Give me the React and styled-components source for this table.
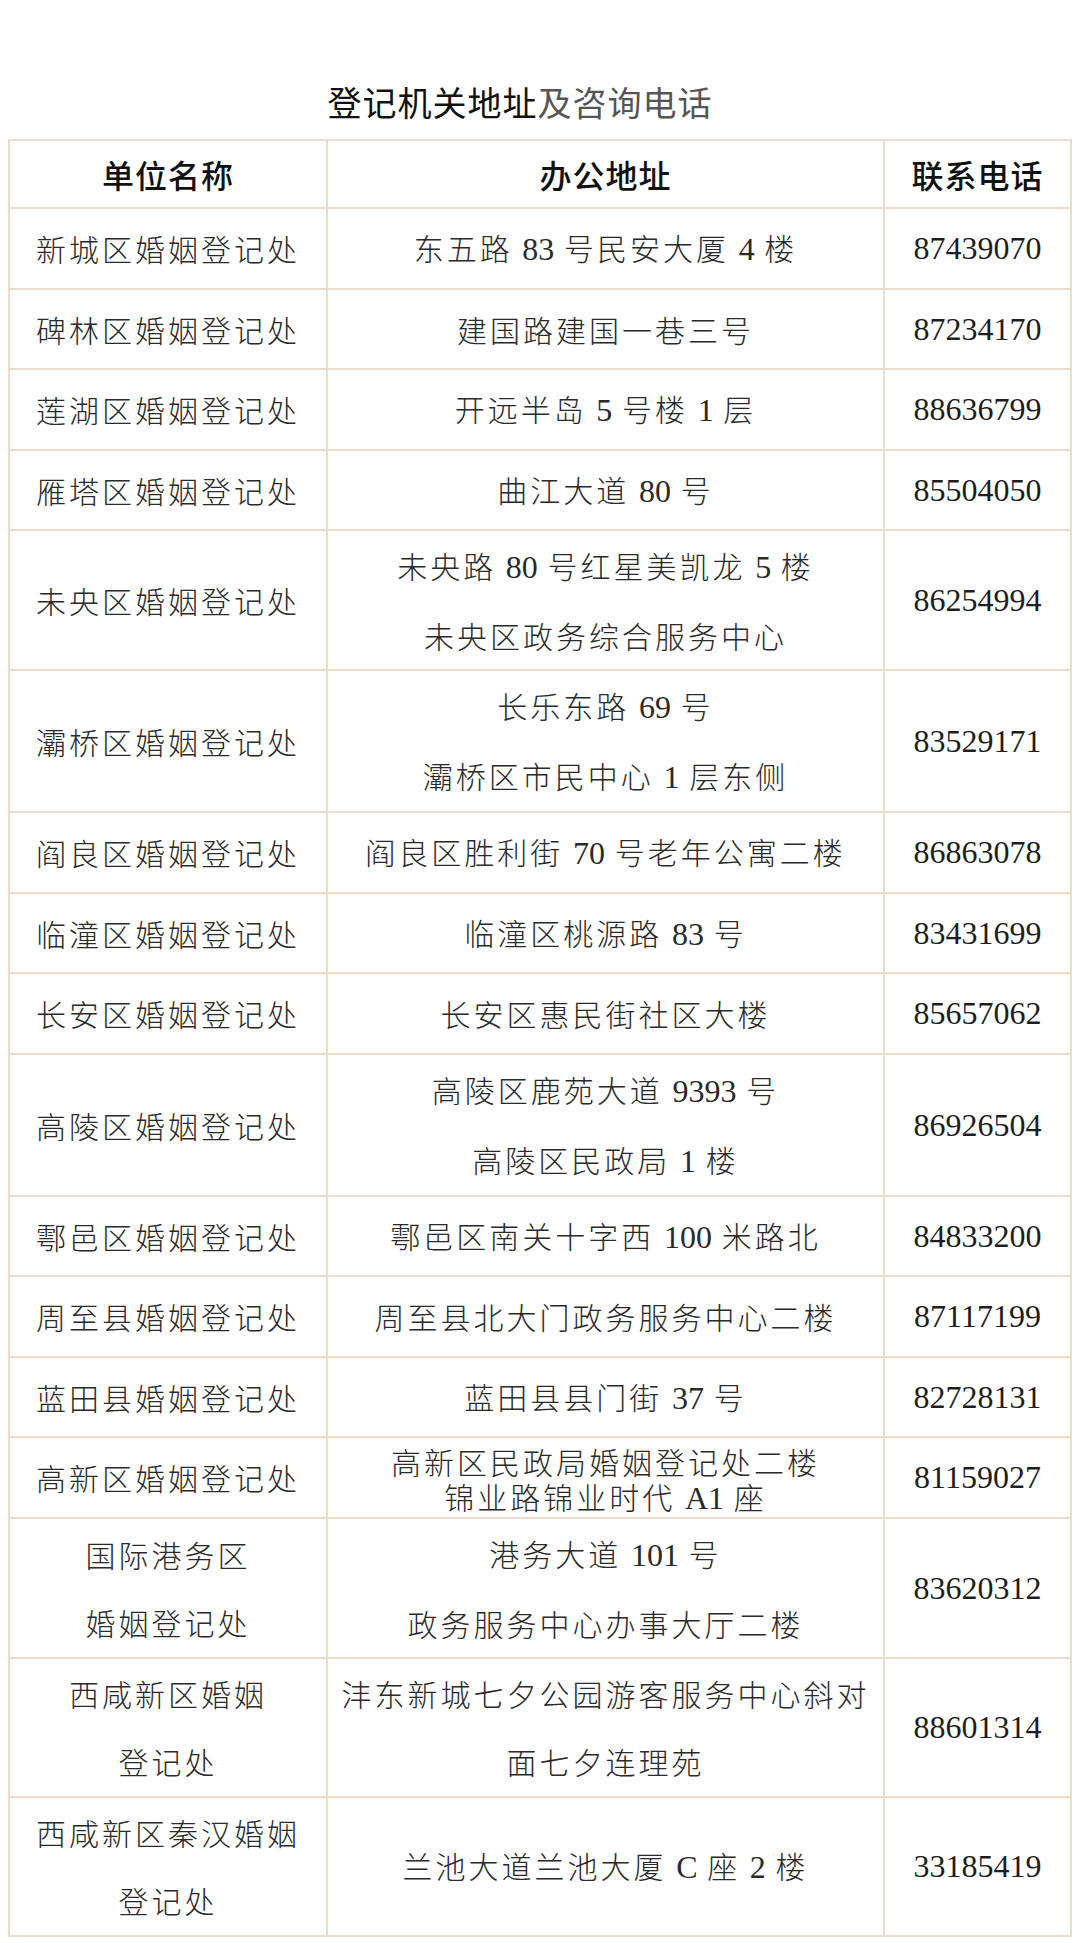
import React from 'react';
import styled, { createGlobalStyle } from 'styled-components';

const GlobalStyle = createGlobalStyle`
  html, body {
    margin: 0;
    padding: 0;
    background: #fff;
  }
  body {
    font-family: "Noto Sans CJK SC", "Noto Sans", sans-serif;
    color: #222;
  }
`;

const BORDER = '#ecdccb';

const Page = styled.div`
  width: 1080px;
  min-height: 1943px;
  padding-top: 78px;
  box-sizing: border-box;
  background: #fff;
`;

const Title = styled.h1`
  margin: 0 40px 13px 0;
  text-align: center;
  font-size: 34px;
  line-height: 48px;
  font-weight: 400;
  letter-spacing: 1px;
  color: #111;
`;

const TitleSoft = styled.span`
  color: #555;
`;

const Table = styled.table`
  margin-left: 8px;
  width: 1062px;
  border-collapse: collapse;
  table-layout: fixed;
  border: 2px solid ${BORDER};
`;

const HeadCell = styled.th`
  height: 68px;
  box-sizing: border-box;
  padding: 0;
  border: 2px solid ${BORDER};
  font-size: 32px;
  font-weight: 500;
  letter-spacing: 1px;
  line-height: 40px;
  color: #111;
  text-align: center;
  vertical-align: middle;
`;

const Cell = styled.td`
  height: ${props => props.tall ? '139px' : '80.5px'};
  box-sizing: border-box;
  padding: ${props => props.compact ? '6px 0 0' : '0'};
  border: 2px solid ${BORDER};
  font-size: 30px;
  font-weight: 300;
  letter-spacing: 3px;
  line-height: ${props => props.tall ? '68px' : props.compact ? '35px' : '40px'};
  color: #2a2a2a;
  text-align: center;
  vertical-align: middle;
  white-space: nowrap;
`;

const Line = styled.div`
  display: block;
`;

const Num = styled.span`
  font-family: "Liberation Serif", "Times New Roman", serif;
  font-size: 32px;
  letter-spacing: 0;
`;

const Phone = styled(Cell)`
  font-family: "Liberation Serif", "Times New Roman", serif;
  font-size: 32px;
  font-weight: 400;
  letter-spacing: 0;
  color: #1e1e1e;
`;

const rows = [
  { name: ['新城区婚姻登记处'], addr: ['东五路 83 号民安大厦 4 楼'], tel: '87439070' },
  { name: ['碑林区婚姻登记处'], addr: ['建国路建国一巷三号'], tel: '87234170' },
  { name: ['莲湖区婚姻登记处'], addr: ['开远半岛 5 号楼 1 层'], tel: '88636799' },
  { name: ['雁塔区婚姻登记处'], addr: ['曲江大道 80 号'], tel: '85504050' },
  { name: ['未央区婚姻登记处'], addr: ['未央路 80 号红星美凯龙 5 楼', '未央区政务综合服务中心'], tel: '86254994' },
  { name: ['灞桥区婚姻登记处'], addr: ['长乐东路 69 号', '灞桥区市民中心 1 层东侧'], tel: '83529171' },
  { name: ['阎良区婚姻登记处'], addr: ['阎良区胜利街 70 号老年公寓二楼'], tel: '86863078' },
  { name: ['临潼区婚姻登记处'], addr: ['临潼区桃源路 83 号'], tel: '83431699' },
  { name: ['长安区婚姻登记处'], addr: ['长安区惠民街社区大楼'], tel: '85657062' },
  { name: ['高陵区婚姻登记处'], addr: ['高陵区鹿苑大道 9393 号', '高陵区民政局 1 楼'], tel: '86926504' },
  { name: ['鄠邑区婚姻登记处'], addr: ['鄠邑区南关十字西 100 米路北'], tel: '84833200' },
  { name: ['周至县婚姻登记处'], addr: ['周至县北大门政务服务中心二楼'], tel: '87117199' },
  { name: ['蓝田县婚姻登记处'], addr: ['蓝田县县门街 37 号'], tel: '82728131' },
  { name: ['高新区婚姻登记处'], addr: ['高新区民政局婚姻登记处二楼', '锦业路锦业时代 A1 座'], tel: '81159027', compact: true },
  { name: ['国际港务区', '婚姻登记处'], addr: ['港务大道 101 号', '政务服务中心办事大厅二楼'], tel: '83620312' },
  { name: ['西咸新区婚姻', '登记处'], addr: ['沣东新城七夕公园游客服务中心斜对', '面七夕连理苑'], tel: '88601314' },
  { name: ['西咸新区秦汉婚姻', '登记处'], addr: ['兰池大道兰池大厦 C 座 2 楼'], tel: '33185419' },
];

// latin letters and digits are set in the serif face, like the original sheet
function Mixed({ text }) {
  return text.split(/([A-Z0-9]+)/).map((part, i) =>
    /^[A-Z0-9]+$/.test(part) ? <Num key={i}>{part}</Num> : part
  );
}

function Lines({ lines }) {
  return lines.map((l, i) => <Line key={i}><Mixed text={l} /></Line>);
}

export default function App() {
  return (
    <Page>
      <GlobalStyle />
      <Title>登记机关地址<TitleSoft>及咨询电话</TitleSoft></Title>
      <Table>
        <colgroup>
          <col style={{ width: '318px' }} />
          <col style={{ width: '557px' }} />
          <col style={{ width: '187px' }} />
        </colgroup>
        <thead>
          <tr>
            <HeadCell>单位名称</HeadCell>
            <HeadCell>办公地址</HeadCell>
            <HeadCell>联系电话</HeadCell>
          </tr>
        </thead>
        <tbody>
          {rows.map(r => {
            const tall = !r.compact && (r.name.length > 1 || r.addr.length > 1);
            return (
              <tr key={r.tel}>
                <Cell tall={tall} compact={false}><Lines lines={r.name} /></Cell>
                <Cell tall={tall} compact={r.compact}><Lines lines={r.addr} /></Cell>
                <Phone tall={tall}>{r.tel}</Phone>
              </tr>
            );
          })}
        </tbody>
      </Table>
    </Page>
  );
}
